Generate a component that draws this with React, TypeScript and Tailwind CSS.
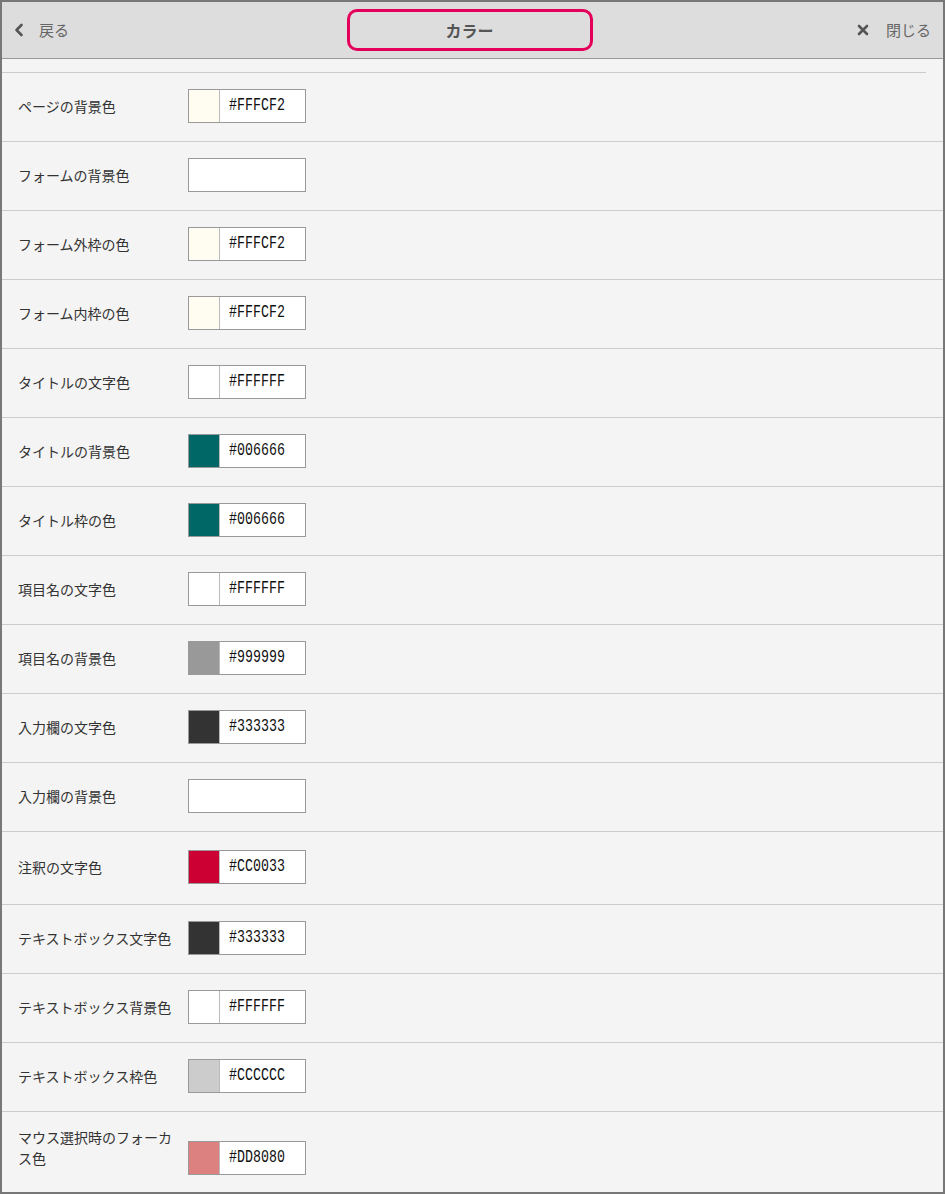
import React from 'react';

type ColorRow = {
  label: string;
  value: string;
  height?: string;
};

const rows: ColorRow[] = [
  { label: 'ページの背景色', value: '#FFFCF2' },
  { label: 'フォームの背景色', value: '' },
  { label: 'フォーム外枠の色', value: '#FFFCF2' },
  { label: 'フォーム内枠の色', value: '#FFFCF2' },
  { label: 'タイトルの文字色', value: '#FFFFFF' },
  { label: 'タイトルの背景色', value: '#006666' },
  { label: 'タイトル枠の色', value: '#006666' },
  { label: '項目名の文字色', value: '#FFFFFF' },
  { label: '項目名の背景色', value: '#999999' },
  { label: '入力欄の文字色', value: '#333333' },
  { label: '入力欄の背景色', value: '' },
  { label: '注釈の文字色', value: '#CC0033', height: 'h-[73px]' },
  { label: 'テキストボックス文字色', value: '#333333' },
  { label: 'テキストボックス背景色', value: '#FFFFFF' },
  { label: 'テキストボックス枠色', value: '#CCCCCC' },
];

const jp = { fontFamily: '"Noto Sans CJK JP", "Noto Sans", sans-serif' };

const ColorInput: React.FC<{ value: string }> = ({ value }) => {
  if (!value) {
    return <div className="w-[118px] h-[34px] border border-[#999] bg-white shrink-0" />;
  }
  return (
    <div className="flex w-[118px] h-[34px] border border-[#999] bg-white shrink-0">
      <div className="w-[31px] h-full border-r border-[#bbb]" style={{ backgroundColor: value }} />
      <div className="flex-1 flex items-center pl-[9px]">
        <span
          className="inline-block scale-y-[1.35] text-[13.3px] text-[#111] leading-none"
          style={{ fontFamily: '"Liberation Mono", monospace' }}
        >
          {value}
        </span>
      </div>
    </div>
  );
};

const App: React.FC = () => {
  return (
    <div className="w-[945px] h-[1194px] border-2 border-[#777] bg-[#f4f4f4] overflow-hidden flex flex-col" style={jp}>
      <header className="h-[57px] shrink-0 bg-[#dddddd] border-b border-[#999] grid grid-cols-[1fr_auto_1fr] items-center text-[15px] text-[#666]">
        <div className="flex items-center pl-[12px] gap-[15px]">
          <svg width="10" height="14" viewBox="0 0 10 14" fill="none">
            <path d="M7.5 2 L2.5 7 L7.5 12" stroke="#555" strokeWidth="2.6" strokeLinecap="round" strokeLinejoin="round" />
          </svg>
          <span>戻る</span>
        </div>
        <div className="w-[246px] h-[42px] mr-[6px] border-[3px] border-[#e4005a] rounded-[10px] flex items-center justify-center text-[16px] font-bold text-[#555]">
          カラー
        </div>
        <div className="flex items-center justify-end pr-[12px] gap-[17px]">
          <svg width="12" height="12" viewBox="0 0 12 12" fill="none">
            <path d="M2 2 L10 10 M10 2 L2 10" stroke="#555" strokeWidth="2.6" strokeLinecap="round" />
          </svg>
          <span>閉じる</span>
        </div>
      </header>

      <div className="h-[14px] shrink-0 border-b border-[#ccc] mr-[17px]" />

      {rows.map((r) => (
        <div key={r.label} className={`${r.height ?? 'h-[69px]'} shrink-0 flex items-center pb-[2px] border-b border-[#ccc]`}>
          <div className="w-[170px] pl-4 text-[14px] leading-[21px] text-[#333]">{r.label}</div>
          <div className="ml-[16px]">
            <ColorInput value={r.value} />
          </div>
        </div>
      ))}

      <div className="flex-1 flex items-start">
        <div className="w-[170px] pl-4 pt-[15px] text-[14px] leading-[21px] text-[#333]">マウス選択時のフォーカス色</div>
        <div className="ml-[16px] mt-[29px]">
          <ColorInput value="#DD8080" />
        </div>
      </div>
    </div>
  );
};

export default App;
